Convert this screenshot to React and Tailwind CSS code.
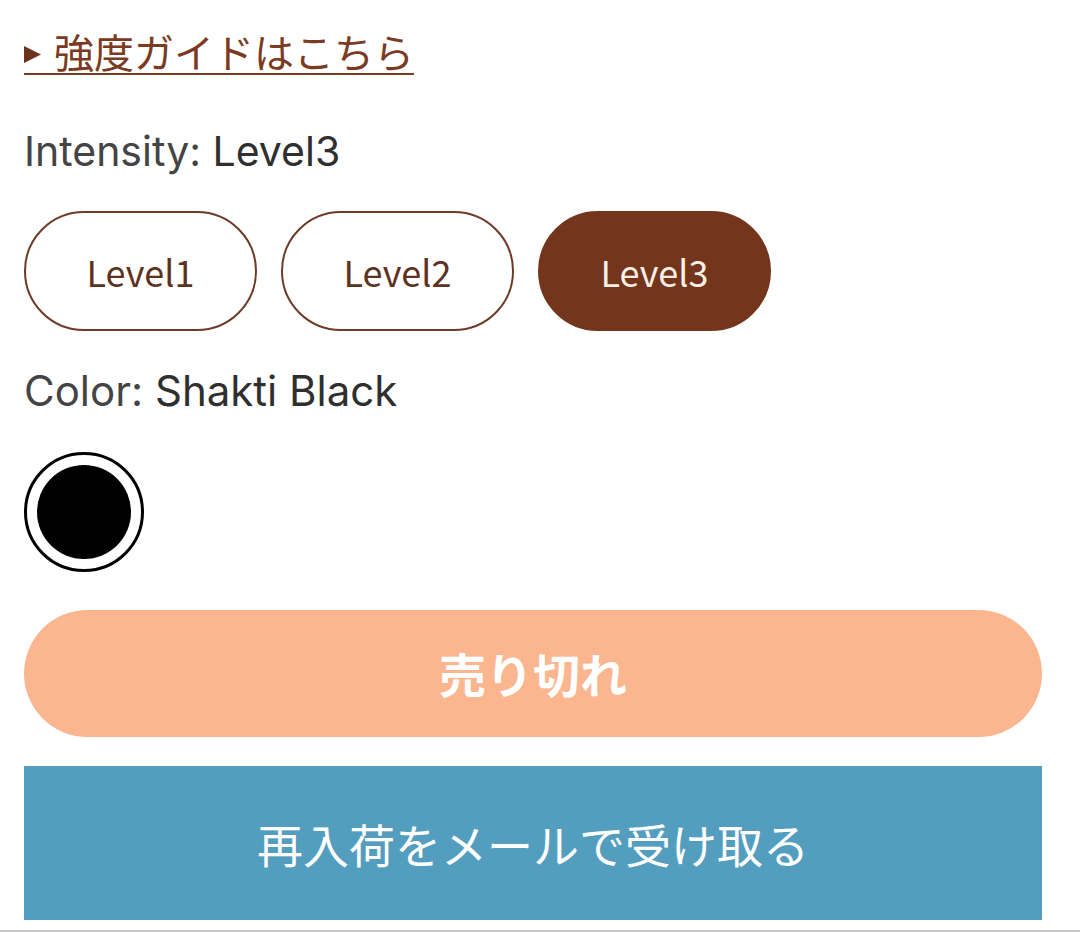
import { useState } from 'react'

const LEVELS = ['Level1', 'Level2', 'Level3']

const jp = { fontFamily: '"Noto Sans CJK JP", "Noto Sans", sans-serif' }
const latin = { fontFamily: 'Inter, "Noto Sans", "Noto Sans CJK JP", sans-serif' }

export default function App() {
  const [level, setLevel] = useState('Level3')

  return (
    <div className="w-[1080px] h-[932px] bg-white overflow-hidden flex flex-col">
      <div className="pl-[24px] pr-[38px] flex flex-col">
        <a
          href="#"
          style={jp}
          className="mt-[29px] self-start flex items-center gap-[13px] border-b-2 border-[#7a3b22] text-[40px] leading-[44px] text-[#7a3b22]"
        >
          <svg viewBox="0 0 16 16" className="w-[17px] h-[17px] shrink-0 mt-[6px]">
            <polygon points="0,0 16,8 0,16" fill="#6b321c" />
          </svg>
          <span>強度ガイドはこちら</span>
        </a>

        <p style={latin} className="mt-[52px] text-[41px] leading-[48px] text-[#444]">
          Intensity: <span className="text-[#2f2f2f]">{level}</span>
        </p>

        <div className="mt-[36px] flex gap-[24px]">
          {LEVELS.map(l => (
            <button
              key={l}
              onClick={() => setLevel(l)}
              style={jp}
              className={`w-[233px] h-[120px] rounded-full text-[36px] border-2 ${
                l === level
                  ? 'bg-[#74351d] border-[#74351d] text-[#fbefe6]'
                  : 'bg-white border-[#6e3a26] text-[#5e3220]'
              }`}
            >
              {l}
            </button>
          ))}
        </div>

        <p style={latin} className="mt-[36px] text-[42px] leading-[48px] text-[#444]">
          Color: <span className="text-[#2f2f2f]">Shakti Black</span>
        </p>

        <div className="mt-[37px] w-[120px] h-[120px] rounded-full border-[3px] border-black flex items-center justify-center">
          <div className="w-[94px] h-[94px] rounded-full bg-black" />
        </div>

        <button
          style={jp}
          className="mt-[38px] h-[127px] w-full rounded-full bg-[#fbb68f] text-white text-[47px] font-bold"
        >
          売り切れ
        </button>

        <button
          style={jp}
          className="mt-[29px] h-[154px] w-full bg-[#539dbf] text-white text-[46px]"
        >
          再入荷をメールで受け取る
        </button>
      </div>
      <div className="mt-auto h-[2px] bg-[#c8c8c8]" />
    </div>
  )
}
